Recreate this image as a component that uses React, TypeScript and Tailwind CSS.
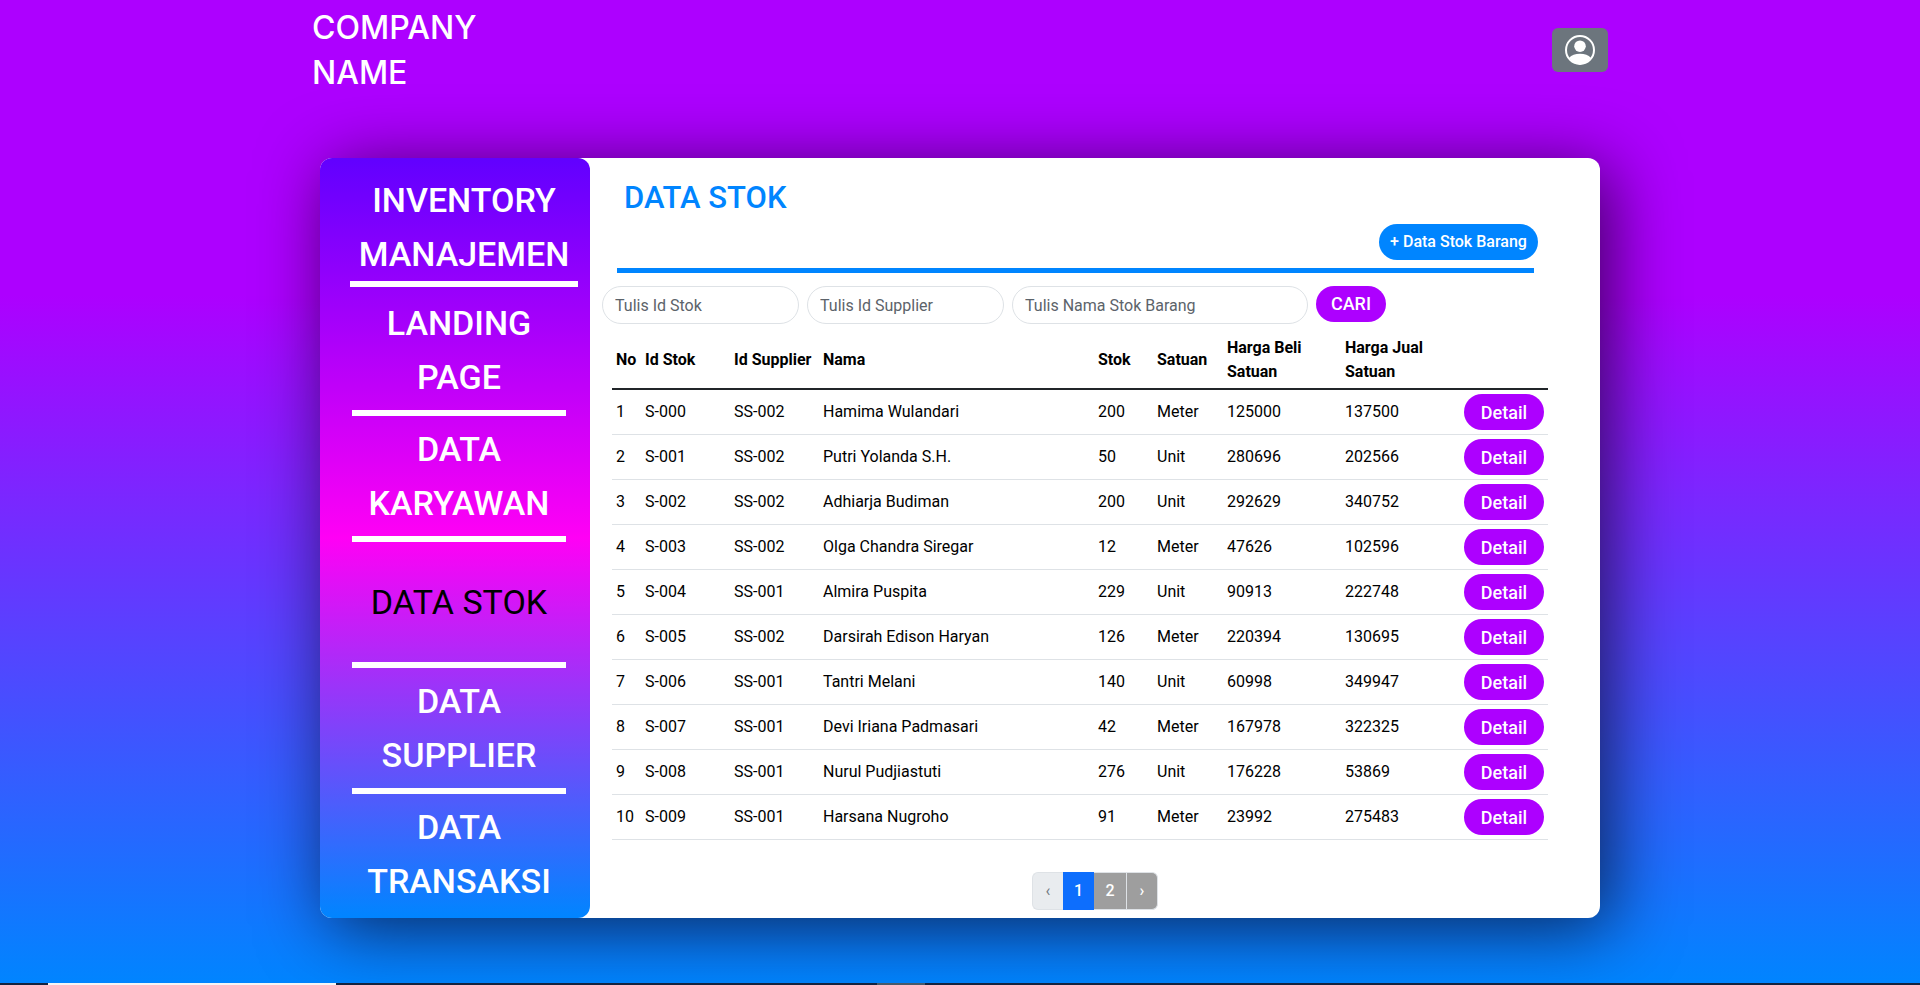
import React from "react";

type StockRow = {
  id: string;
  supplier: string;
  name: string;
  stock: number;
  unit: string;
  buy: number;
  sell: number;
};

const rows: StockRow[] = [
  { id: "S-000", supplier: "SS-002", name: "Hamima Wulandari", stock: 200, unit: "Meter", buy: 125000, sell: 137500 },
  { id: "S-001", supplier: "SS-002", name: "Putri Yolanda S.H.", stock: 50, unit: "Unit", buy: 280696, sell: 202566 },
  { id: "S-002", supplier: "SS-002", name: "Adhiarja Budiman", stock: 200, unit: "Unit", buy: 292629, sell: 340752 },
  { id: "S-003", supplier: "SS-002", name: "Olga Chandra Siregar", stock: 12, unit: "Meter", buy: 47626, sell: 102596 },
  { id: "S-004", supplier: "SS-001", name: "Almira Puspita", stock: 229, unit: "Unit", buy: 90913, sell: 222748 },
  { id: "S-005", supplier: "SS-002", name: "Darsirah Edison Haryan", stock: 126, unit: "Meter", buy: 220394, sell: 130695 },
  { id: "S-006", supplier: "SS-001", name: "Tantri Melani", stock: 140, unit: "Unit", buy: 60998, sell: 349947 },
  { id: "S-007", supplier: "SS-001", name: "Devi Iriana Padmasari", stock: 42, unit: "Meter", buy: 167978, sell: 322325 },
  { id: "S-008", supplier: "SS-001", name: "Nurul Pudjiastuti", stock: 276, unit: "Unit", buy: 176228, sell: 53869 },
  { id: "S-009", supplier: "SS-001", name: "Harsana Nugroho", stock: 91, unit: "Meter", buy: 23992, sell: 275483 },
];

const menu = ["LANDING PAGE", "DATA KARYAWAN", "DATA STOK", "DATA SUPPLIER", "DATA TRANSAKSI"];

function UserIcon() {
  return (
    <svg viewBox="0 0 30 30" className="size-[30px]" aria-hidden="true">
      <circle cx="15" cy="15" r="14" fill="none" stroke="white" strokeWidth="2" />
      <circle cx="15" cy="11.2" r="5.8" fill="white" />
      <path d="M4.2 22.8C6.4 20.3 10.3 18.8 15 18.8s8.600 1.500 10.800 4A14 14 0 0 1 15 29.500 14 14 0 0 1 4.200 22.800Z" fill="white" />
    </svg>
  );
}

function Header() {
  return (
    <header className="mx-auto flex w-full max-w-[1296px] items-center justify-between pt-[5px]">
      <a href="#" className="w-44 font-['Inter',sans-serif] text-[32px] leading-[45px] font-medium text-white">
        COMPANY NAME
      </a>
      <button type="button" aria-label="Akun" className="flex h-11 w-14 items-center justify-center rounded-md bg-[#6c757d]">
        <UserIcon />
      </button>
    </header>
  );
}

function Sidebar() {
  return (
    <aside className="flex w-[270px] shrink-0 flex-col rounded-xl bg-[linear-gradient(180deg,#6100ff_0%,#ff00f5_50%,#0085ff_100%)] text-center text-[34px] leading-[54px] font-medium text-white">
      <h1 className="mr-3 ml-[30px] h-[129px] border-b-6 border-white pt-[15px]">
        INVENTORY MANAJEMEN
      </h1>
      <nav className="mr-6 ml-8 flex grow flex-col pt-[3px]">
        {menu.map((item) => (
          <a
            key={item}
            href="#"
            className={
              item === "DATA STOK"
                ? "flex h-[126px] items-center justify-center border-b-6 border-white font-normal text-black"
                : "flex h-[126px] items-center justify-center border-b-6 border-white last:h-[120px] last:border-b-0"
            }
          >
            {item}
          </a>
        ))}
      </nav>
    </aside>
  );
}

const field =
  "h-[38px] min-w-0 rounded-full border border-[#dee2e6] px-3 text-base text-black placeholder:text-[#5c636a]";

function SearchForm() {
  return (
    <form className="mt-[13px] flex items-start gap-2 px-3" onSubmit={(e) => e.preventDefault()}>
      <input aria-label="Id Stok" placeholder="Tulis Id Stok" className={`${field} w-[197px]`} />
      <input aria-label="Id Supplier" placeholder="Tulis Id Supplier" className={`${field} w-[197px]`} />
      <input aria-label="Nama Stok Barang" placeholder="Tulis Nama Stok Barang" className={`${field} w-[296px]`} />
      <button type="submit" className="h-9 w-[70px] rounded-full bg-[#ad00ff] text-lg leading-9 font-medium text-white">
        CARI
      </button>
    </form>
  );
}

function StockTable() {
  return (
    <div className="mt-2 mr-[52px] ml-[22px]">
      <table className="w-full table-fixed border-separate border-spacing-0 text-left text-base leading-6 text-black">
        <colgroup>
          <col className="w-[29px]" />
          <col className="w-[89px]" />
          <col className="w-[89px]" />
          <col />
          <col className="w-[59px]" />
          <col className="w-[70px]" />
          <col className="w-[118px]" />
          <col className="w-[119px]" />
          <col className="w-[88px]" />
        </colgroup>
        <thead>
          <tr className="[&>*]:border-b-2 [&>*]:border-[#212529] [&>*]:p-1">
            <th>No</th>
            <th>Id Stok</th>
            <th className="whitespace-nowrap">Id Supplier</th>
            <th>Nama</th>
            <th>Stok</th>
            <th>Satuan</th>
            <th>Harga Beli<br />Satuan</th>
            <th>Harga Jual<br />Satuan</th>
            <td></td>
          </tr>
        </thead>
        <tbody>
          {rows.map((r, i) => (
            <tr key={r.id} className="[&>td]:border-b [&>td]:border-[#dee2e6] [&>td]:p-1">
              <td>{i + 1}</td>
              <td>{r.id}</td>
              <td>{r.supplier}</td>
              <td>{r.name}</td>
              <td>{r.stock}</td>
              <td>{r.unit}</td>
              <td>{r.buy}</td>
              <td>{r.sell}</td>
              <td>
                <button type="button" className="block h-9 w-20 rounded-full bg-[#ad00ff] pt-0.5 text-lg leading-8 font-medium text-white">
                  Detail
                </button>
              </td>
            </tr>
          ))}
        </tbody>
      </table>
    </div>
  );
}

function Pagination() {
  return (
    <nav aria-label="Halaman" className="mt-8 flex justify-center pb-2 text-base leading-6">
      <button type="button" disabled className="h-[38px] w-[31px] rounded-l-md border border-r-0 border-[#dee2e6] bg-[#e9ecef] text-[#6c757d]">‹</button>
      <button type="button" className="h-[38px] w-[31px] bg-[#0d6efd] font-medium text-white">1</button>
      <button type="button" className="h-[38px] w-[33px] border border-l-0 border-[#dee2e6] bg-[#9e9e9e] font-medium text-white">2</button>
      <button type="button" className="h-[38px] w-[31px] rounded-r-md border border-l-0 border-[#dee2e6] bg-[#9e9e9e] font-medium text-white">›</button>
    </nav>
  );
}

export default function App() {
  return (
    <div className="flex min-h-screen flex-col bg-[linear-gradient(180deg,#ad00ff_30%,#0085ff_100%)] font-['Roboto',sans-serif]">
      <Header />
      <div className="mx-auto mt-[63px] mb-12 flex w-full max-w-[1280px] rounded-xl bg-white shadow-[10px_10px_70px_rgba(0,0,0,0.65)]">
        <Sidebar />
        <main className="flex min-w-0 grow flex-col pt-[15px]">
          <h2 className="px-[34px] text-[31px] leading-[50px] font-medium text-[#0085ff]">DATA STOK</h2>
          <div className="mt-px flex justify-end pr-[62px]">
            <button type="button" className="h-9 w-[159px] rounded-full bg-[#0085ff] text-base font-medium text-white">
              + Data Stok Barang
            </button>
          </div>
          <hr className="mt-2 mr-[66px] ml-[27px] h-[5px] border-0 bg-[#0085ff]" />
          <SearchForm />
          <StockTable />
          <Pagination />
        </main>
      </div>
      <footer className="mt-auto flex h-0.5 bg-[#14233f]">
        <div className="ml-12 w-72 bg-[#f5f5f5]" />
        <div className="ml-[541px] w-12 bg-[#465a6b]" />
      </footer>
    </div>
  );
}
